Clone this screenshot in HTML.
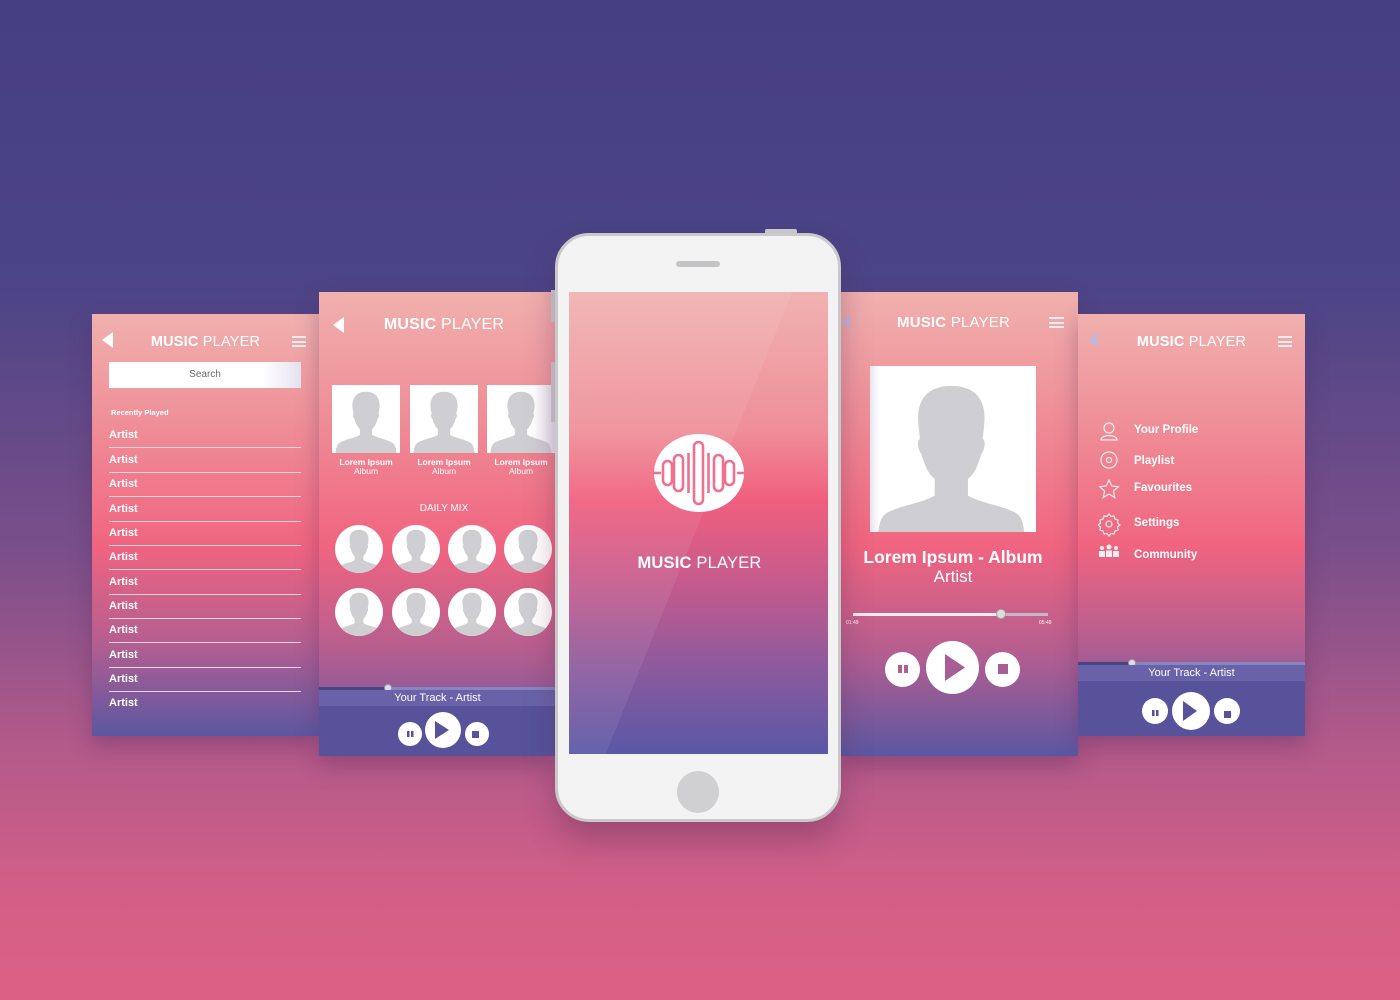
<!DOCTYPE html><html><head><meta charset="utf-8"><style>
*{margin:0;padding:0;box-sizing:border-box}
body{width:1400px;height:1000px;position:relative;overflow:hidden;font-family:"Liberation Sans",sans-serif;color:#fff;
background:linear-gradient(180deg,#463f82 0%,#4b4486 28%,#7a4f8a 55%,#b45a8a 75%,#d45f86 90%,#dc6086 100%)}
.a{position:absolute}
.scr{background:linear-gradient(180deg,#f0b0ae 0%,#ef8c96 28%,#f06480 55%,#b45e90 78%,#5b57a2 100%)}
.title{font-size:14.5px;letter-spacing:.2px;text-align:center}
.title b{font-weight:bold}
.hb{width:14px;height:11px;border-top:2px solid #eee;border-bottom:2px solid #eee}
.hb:after{content:"";display:block;height:2px;background:#eee;margin-top:2.5px}
.back{width:0;height:0;border-top:8px solid transparent;border-bottom:8px solid transparent;border-right:11px solid #fff}
.row{position:absolute;left:17px;width:192px;font-size:11px;font-weight:bold;border-bottom:1.5px solid #e8d4dc;height:24.3px;padding-top:5px}
.circ{position:absolute;width:48px;height:48px;border-radius:50%;background:#fff;overflow:hidden}
.btn{position:absolute;border-radius:50%;background:#fff}
.mi{position:absolute;left:56px;font-size:11.5px;line-height:1;font-weight:bold}
</style></head><body>
<svg width="0" height="0" style="position:absolute"><defs>
<symbol id="p" viewBox="0 0 100 100"><path d="M50 10c-13 0-20 8-20 20 0 4 1 9 2 12-2 1-1 6 1 8 2 8 5 12 8 15v8c-4 4-22 7-30 12-4 3-5 8-6 15h90c-1-7-2-12-6-15-8-5-26-8-30-12v-8c3-3 6-7 8-15 2-2 3-7 1-8 1-3 2-8 2-12 0-12-7-20-20-20z" fill="#cfcfd3"/></symbol>
</defs></svg>

<!-- Panel 1 -->
<div class="a scr" style="left:92px;top:314px;width:227px;height:422px;box-shadow:0 10px 20px rgba(80,40,90,.35)">
 <div class="a back" style="left:10px;top:18px"></div>
 <div class="a title" style="left:0;width:227px;top:20px"><b>MUSIC</b> PLAYER</div>
 <div class="a hb" style="left:200px;top:22px"></div>
 <div class="a" style="left:17px;top:48px;width:192px;height:26px;background:linear-gradient(90deg,#fff 80%,#e6e2f0);color:#666;font-size:10px;text-align:center;line-height:26px">Search</div>
 <div class="a" style="left:19px;top:94px;font-size:7.5px;font-weight:bold">Recently Played</div>
 <div class="row" style="top:110px">Artist</div><div class="row" style="top:134.5px">Artist</div><div class="row" style="top:159px">Artist</div><div class="row" style="top:183.5px">Artist</div><div class="row" style="top:208px">Artist</div><div class="row" style="top:232px">Artist</div><div class="row" style="top:256.5px">Artist</div><div class="row" style="top:281px">Artist</div><div class="row" style="top:305px">Artist</div><div class="row" style="top:329.5px">Artist</div><div class="row" style="top:354px">Artist</div><div class="row" style="top:378px;border:0">Artist</div>
</div>

<!-- Panel 2 -->
<div class="a scr" style="left:319px;top:292px;width:237px;height:464px;box-shadow:0 10px 20px rgba(80,40,90,.35);overflow:hidden">
 <div class="a back" style="left:14px;top:25px"></div>
 <div class="a title" style="left:0;width:250px;top:24px;font-size:16px"><b>MUSIC</b> PLAYER</div>
 <div class="a" style="left:13px;top:93px;width:68px;height:68px;background:#fff"><svg width="68" height="68"><use href="#p"/></svg></div>
 <div class="a" style="left:91px;top:93px;width:68px;height:68px;background:#fff"><svg width="68" height="68"><use href="#p"/></svg></div>
 <div class="a" style="left:168px;top:93px;width:68px;height:68px;background:linear-gradient(90deg,#fff 70%,#e4dfee)"><svg width="68" height="68"><use href="#p"/></svg></div>
 <div class="a" style="left:13px;top:166px;width:68px;text-align:center;font-size:8.5px;line-height:9px"><b>Lorem Ipsum</b><br>Album</div>
 <div class="a" style="left:91px;top:166px;width:68px;text-align:center;font-size:8.5px;line-height:9px"><b>Lorem Ipsum</b><br>Album</div>
 <div class="a" style="left:168px;top:166px;width:68px;text-align:center;font-size:8.5px;line-height:9px"><b>Lorem Ipsum</b><br>Album</div>
 <div class="a" style="left:0;width:250px;top:211px;text-align:center;font-size:10px">DAILY MIX</div>
 <div class="circ" style="left:16px;top:233px"><svg width="48" height="48"><use href="#p"/></svg></div>
 <div class="circ" style="left:73px;top:233px"><svg width="48" height="48"><use href="#p"/></svg></div>
 <div class="circ" style="left:129px;top:233px"><svg width="48" height="48"><use href="#p"/></svg></div>
 <div class="circ" style="left:185px;top:233px"><svg width="48" height="48"><use href="#p"/></svg></div>
 <div class="circ" style="left:16px;top:296px"><svg width="48" height="48"><use href="#p"/></svg></div>
 <div class="circ" style="left:73px;top:296px"><svg width="48" height="48"><use href="#p"/></svg></div>
 <div class="circ" style="left:129px;top:296px"><svg width="48" height="48"><use href="#p"/></svg></div>
 <div class="circ" style="left:185px;top:296px"><svg width="48" height="48"><use href="#p"/></svg></div>
 <div class="a" style="left:0;top:395px;width:237px;height:3px;background:#8a85c0"></div>
 <div class="a" style="left:0;top:395px;width:69px;height:3px;background:#4a4580"></div>
 <div class="a" style="left:65px;top:392px;width:8px;height:8px;border-radius:50%;background:#dde;border:1px solid #99a"></div>
 <div class="a" style="left:0;top:398px;width:237px;height:16px;background:#6863a8;text-align:center;font-size:11px;line-height:16px">Your Track - Artist</div>
 <div class="a" style="left:0;top:414px;width:237px;height:50px;background:#57529a"></div>
 <div class="btn" style="left:79px;top:430px;width:24px;height:24px"></div>
 <div class="btn" style="left:106px;top:420px;width:36px;height:36px"></div>
 <div class="btn" style="left:146px;top:430px;width:24px;height:24px"></div>
 <svg class="a" style="left:79px;top:420px" width="92" height="36"><rect x="9" y="19" width="2.5" height="6" fill="#57529a"/><rect x="13" y="19" width="2.5" height="6" fill="#57529a"/><path d="M37 9v18l14-9z" fill="#57529a"/><rect x="74" y="19" width="7" height="7" fill="#57529a"/></svg>
</div>

<!-- Panel 4 -->
<div class="a scr" style="left:841px;top:292px;width:237px;height:464px;box-shadow:0 10px 20px rgba(80,40,90,.35)">
 <div class="a" style="left:0;top:22px;border-top:8px solid transparent;border-bottom:8px solid transparent;border-right:9px solid #c7b5d5"></div>
 <div class="a title" style="left:0;width:225px;top:22px;font-size:15px"><b>MUSIC</b> PLAYER</div>
 <div class="a hb" style="left:208px;top:25px;width:15px"></div>
 <div class="a" style="left:29px;top:74px;width:166px;height:166px;background:linear-gradient(90deg,#e8e6f0,#fff 6%)"><svg width="166" height="166" viewBox="0 0 100 100" preserveAspectRatio="none"><path d="M49 12c-13 0-20 7-20 19 0 5 1 10 1 13-2 1-1 7 1 9 2 7 4 12 8 15v10c-6 4-20 6-28 10-4 2-5 5-6 12h88c-1-7-2-10-6-12-8-4-22-6-28-10v-10c4-3 6-8 8-15 2-2 3-8 1-9 0-3 1-8 1-13 0-12-7-19-20-19z" fill="#cfcfd3"/></svg></div>
 <div class="a" style="left:0;width:224px;top:255px;text-align:center;font-size:17.5px;font-weight:bold">Lorem Ipsum - Album</div>
 <div class="a" style="left:0;width:224px;top:275px;text-align:center;font-size:17px">Artist</div>
 <div class="a" style="left:12px;top:321px;width:195px;height:3px;background:#c0b8c8"></div>
 <div class="a" style="left:12px;top:321px;width:148px;height:3px;background:#eee"></div>
 <div class="a" style="left:155px;top:317px;width:10px;height:10px;border-radius:50%;background:#ddd;border:1px solid #aaa"></div>
 <div class="a" style="left:5px;top:328px;font-size:5px">01:49</div><div class="a" style="left:198px;top:328px;font-size:5px">05:49</div>
 <div class="btn" style="left:44px;top:360px;width:35px;height:35px"></div>
 <div class="btn" style="left:85px;top:349px;width:53px;height:53px"></div>
 <div class="btn" style="left:144px;top:360px;width:35px;height:35px"></div>
 <svg class="a" style="left:44px;top:349px" width="135" height="53"><rect x="13" y="24" width="4" height="8" fill="#b05f95"/><rect x="19" y="24" width="4" height="8" fill="#b05f95"/><path d="M60 13v27l20-13.5z" fill="#a85d95"/><rect x="113" y="23" width="10" height="10" fill="#a85d95"/></svg>
</div>

<!-- Panel 5 -->
<div class="a scr" style="left:1078px;top:314px;width:227px;height:422px;box-shadow:0 10px 20px rgba(80,40,90,.35);overflow:hidden">
 <div class="a" style="left:10px;top:18px;border-top:8px solid transparent;border-bottom:8px solid transparent;border-right:10px solid #c7b5d5"></div>
 <div class="a title" style="left:0;width:227px;top:20px"><b>MUSIC</b> PLAYER</div>
 <div class="a hb" style="left:200px;top:22px"></div>
 <svg class="a" style="left:20px;top:107px" width="25" height="150" fill="none" stroke="#eee" stroke-width="1.2">
  <circle cx="11" cy="7" r="5"/><path d="M3 19c0-6 16-6 16 0z"/>
  <circle cx="11" cy="39" r="8"/><circle cx="11" cy="39" r="2.5"/>
  <path d="M11 59l2.8 6 6.5.7-4.9 4.4 1.4 6.4-5.8-3.4-5.8 3.4 1.4-6.4-4.9-4.4 6.5-.7z"/>
  <circle cx="11" cy="103" r="3"/><path d="M11 93l2 2.5 3-.5 1 3 3 1-.5 3 2.5 2-2.5 2 .5 3-3 1-1 3-3-.5-2 2.5-2-2.5-3 .5-1-3-3-1 .5-3-2.5-2 2.5-2-.5-3 3-1 1-3 3 .5z"/>
  <g fill="#eee" stroke="none"><circle cx="4" cy="127" r="2"/><circle cx="11" cy="126" r="2.5"/><circle cx="18" cy="127" r="2"/><rect x="1" y="130" width="6" height="6"/><rect x="8" y="129.5" width="6" height="6.5"/><rect x="15" y="130" width="6" height="6"/></g>
 </svg>
 <div class="mi" style="top:111px">Your Profile</div>
 <div class="mi" style="top:142px">Playlist</div>
 <div class="mi" style="top:169px">Favourites</div>
 <div class="mi" style="top:204px">Settings</div>
 <div class="mi" style="top:236px">Community</div>
 <div class="a" style="left:0;top:348px;width:227px;height:3px;background:#8a85c0"></div>
 <div class="a" style="left:0;top:348px;width:53px;height:3px;background:#4a4580"></div>
 <div class="a" style="left:50px;top:345px;width:8px;height:8px;border-radius:50%;background:#dde;border:1px solid #99a"></div>
 <div class="a" style="left:0;top:351px;width:227px;height:16px;background:#6863a8;text-align:center;font-size:11px;line-height:16px">Your Track - Artist</div>
 <div class="a" style="left:0;top:367px;width:227px;height:55px;background:#57529a"></div>
 <div class="btn" style="left:64px;top:384px;width:26px;height:26px"></div>
 <div class="btn" style="left:94px;top:378px;width:38px;height:38px"></div>
 <div class="btn" style="left:136px;top:384px;width:26px;height:26px"></div>
 <svg class="a" style="left:64px;top:378px" width="98" height="38"><rect x="10" y="18" width="2.5" height="6" fill="#57529a"/><rect x="14" y="18" width="2.5" height="6" fill="#57529a"/><path d="M41 9v20l14-10z" fill="#57529a"/><rect x="82" y="19" width="7" height="7" fill="#57529a"/></svg>
</div>

<!-- Phone -->
<div class="a" style="left:765px;top:229px;width:32px;height:6px;background:#ccc;border-radius:2px"></div>
<div class="a" style="left:551px;top:290px;width:6px;height:32px;background:#ccc"></div>
<div class="a" style="left:551px;top:362px;width:6px;height:60px;background:#ccc"></div>
<div class="a" style="left:555px;top:233px;width:286px;height:589px;border-radius:34px;background:#f3f3f4;border:3px solid #c9c9cc;box-shadow:0 18px 30px rgba(90,40,80,.35)"></div>
<div class="a" style="left:676px;top:261px;width:44px;height:6px;border-radius:3px;background:#c3c3c6"></div>
<div class="a" style="left:677px;top:771px;width:42px;height:42px;border-radius:50%;background:#d0d0d3"></div>
<div class="a scr" style="left:569px;top:292px;width:259px;height:462px;overflow:hidden;background:linear-gradient(180deg,#f0b2b0 0%,#ef8e98 30%,#f05f7e 45%,#c05a8e 65%,#8a5a9e 82%,#5a57a6 100%)">
 <div class="a" style="left:0;top:0;width:260px;height:462px;background:linear-gradient(112deg,rgba(255,255,255,.07) 0%,rgba(255,255,255,.07) 50%,transparent 50%)"></div>
 <svg class="a" style="left:84px;top:141px" width="92" height="80" viewBox="0 0 92 80">
  <ellipse cx="46" cy="40" rx="45" ry="39" fill="#fff"/>
  <g fill="#fff" stroke="#f07090" stroke-width="2.6">
  <line x1="0" y1="40" x2="8" y2="40"/><line x1="84" y1="40" x2="92" y2="40"/>
  <rect x="10" y="28" width="9" height="24" rx="4.5"/><rect x="21" y="22" width="9" height="36" rx="4.5"/><rect x="41" y="9" width="9" height="62" rx="4.5"/><rect x="61" y="22" width="9" height="36" rx="4.5"/><rect x="72" y="28" width="9" height="24" rx="4.5"/></g>
  <g fill="none" stroke="#f07090" stroke-width="2.6"><line x1="35.5" y1="20" x2="35.5" y2="60"/><line x1="55.5" y1="20" x2="55.5" y2="60"/></g>
 </svg>
 <div class="a title" style="left:0;width:261px;top:262px;font-size:16.5px"><b>MUSIC</b> PLAYER</div>
</div>
</body></html>
